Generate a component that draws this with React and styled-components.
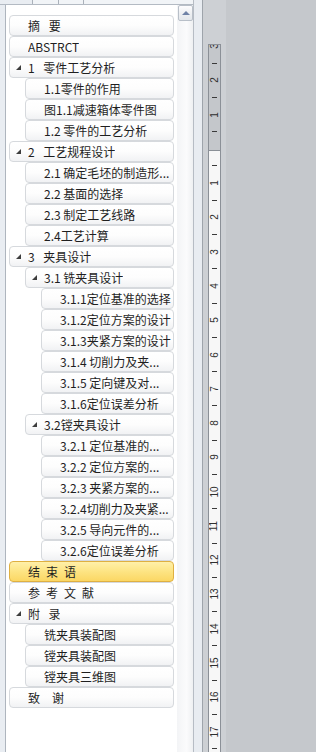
import React from 'react';
import styled, { createGlobalStyle } from 'styled-components';

const GlobalStyle = createGlobalStyle`
  html, body {
    margin: 0;
    padding: 0;
  }
  body {
    width: 316px;
    height: 752px;
    overflow: hidden;
    background: #c5c8cc;
    font-family: "Noto Sans CJK SC", "Noto Sans", sans-serif;
  }
`;

// Screen holds the navigation pane, the splitter and the document area
const Screen = styled.div`
  display: flex;
  width: 316px;
  height: 752px;
  overflow: hidden;
`;

const NavPane = styled.div`
  flex: none;
  width: 194px;
  display: flex;
  flex-direction: column;
  background: #e9edf2;
  border-right: 1px solid #b6bcc4;
  box-sizing: border-box;
`;

const TabStrip = styled.div`
  flex: none;
  height: 5px;
  display: flex;
  padding-left: 32px;
  box-sizing: border-box;
  border-bottom: 1px solid #b3bac3;
`;

const Tab = styled.div`
  width: ${p => p.$w}px;
  background: #f1f4f7;
  border-left: 1px solid #aab1ba;
  box-sizing: border-box;
  &:last-child {
    flex: 1;
  }
`;

const PaneBody = styled.div`
  flex: 1;
  display: flex;
  margin-left: 5px;
  border-left: 1px solid #aeb5be;
  min-height: 0;
`;

const Outline = styled.div`
  flex: 1;
  background: #ffffff;
  padding: 10px 3px 0 3px;
  display: flex;
  flex-direction: column;
`;

const ScrollTrack = styled.div`
  flex: none;
  width: 16px;
  background: linear-gradient(90deg, #f3f4f6, #fbfbfc 60%, #eef0f2);
  display: flex;
  flex-direction: column;
  align-items: center;
`;

const ScrollButton = styled.div`
  width: 15px;
  height: 16px;
  box-sizing: border-box;
  border: 1px solid #b8bfc8;
  border-radius: 2px;
  background: linear-gradient(#fdfdfe, #eef0f3 50%, #e3e7eb);
  display: flex;
  align-items: center;
  justify-content: center;
  margin-left: 1px;
`;

const UpArrow = styled.div`
  width: 0;
  height: 0;
  border-left: 4px solid transparent;
  border-right: 4px solid transparent;
  border-bottom: 4px solid #6f82a6;
  margin-top: -1px;
`;

const Item = styled.div`
  flex: none;
  box-sizing: border-box;
  height: 21px;
  margin-left: ${p => (p.$level - 1) * 16}px;
  padding: 0 1px 0 6px;
  display: flex;
  align-items: center;
  border: 1px solid ${p => (p.$active ? '#dfb041' : '#d6d9dd')};
  border-radius: 4px;
  background: ${p =>
    p.$active
      ? 'linear-gradient(#fff0a9, #fde483 50%, #fbd764)'
      : 'linear-gradient(#ffffff, #fdfdfd 50%, #f1f2f4)'};
  overflow: hidden;
`;

const Twisty = styled.span`
  flex: none;
  width: 12px;
  display: flex;
  align-items: center;
`;

const Triangle = styled.span`
  width: 0;
  height: 0;
  border-left: 5px solid transparent;
  border-bottom: 5px solid #3d3d3d;
`;

const Label = styled.span`
  font-size: 12px;
  color: #1f1f1f;
  white-space: pre;
  overflow: hidden;
  line-height: 19px;
`;

const Splitter = styled.div`
  flex: none;
  width: 8px;
  background: #e8ecf1;
  border-right: 1px solid #9ea4ab;
`;

const RulerColumn = styled.div`
  flex: none;
  width: 23px;
  background: #cdd0d4;
  padding: 44px 0 0 5px;
  box-sizing: border-box;
  display: flex;
`;

const Ruler = styled.div`
  width: 13px;
  box-sizing: border-box;
  border: 1px solid #8b9097;
  border-bottom: none;
  overflow: hidden;
  background: linear-gradient(#c4c7cb 0, #c4c7cb 105px, #8b9097 105px, #8b9097 106px, #f7f7f7 106px);
  display: flex;
  flex-direction: column;
`;

const Mark = styled.div`
  flex: none;
  height: 17.15px;
  display: flex;
  align-items: center;
  justify-content: center;
  &:first-child {
    margin-top: -7.6px;
  }
`;

const Tick = styled.div`
  width: 5px;
  height: 1px;
  background: #3a3a3a;
`;

const RulerNumber = styled.span`
  font-family: "Liberation Sans", Arial, sans-serif;
  font-size: 10px;
  line-height: 10px;
  color: #2f2f2f;
  transform: rotate(-90deg);
  white-space: nowrap;
`;

const Canvas = styled.div`
  flex: 1;
  background: #c5c8cc;
`;

const outline = [
  { level: 1, text: '摘\u2002 要' },
  { level: 1, text: 'ABSTRCT' },
  { level: 1, text: '1\u2002 零件工艺分析', open: true },
  { level: 2, text: '1.1零件的作用' },
  { level: 2, text: '图1.1减速箱体零件图' },
  { level: 2, text: '1.2 零件的工艺分析' },
  { level: 1, text: '2\u2002 工艺规程设计', open: true },
  { level: 2, text: '2.1 确定毛坯的制造形...' },
  { level: 2, text: '2.2 基面的选择' },
  { level: 2, text: '2.3 制定工艺线路' },
  { level: 2, text: '2.4工艺计算' },
  { level: 1, text: '3\u2002 夹具设计', open: true },
  { level: 2, text: '3.1 铣夹具设计', open: true },
  { level: 3, text: '3.1.1定位基准的选择' },
  { level: 3, text: '3.1.2定位方案的设计' },
  { level: 3, text: '3.1.3夹紧方案的设计' },
  { level: 3, text: '3.1.4 切削力及夹...' },
  { level: 3, text: '3.1.5 定向键及对...' },
  { level: 3, text: '3.1.6定位误差分析' },
  { level: 2, text: '3.2镗夹具设计', open: true },
  { level: 3, text: '3.2.1 定位基准的...' },
  { level: 3, text: '3.2.2 定位方案的...' },
  { level: 3, text: '3.2.3 夹紧方案的...' },
  { level: 3, text: '3.2.4切削力及夹紧...' },
  { level: 3, text: '3.2.5 导向元件的...' },
  { level: 3, text: '3.2.6定位误差分析' },
  { level: 1, text: '结\u2002束\u2002语', active: true },
  { level: 1, text: '参\u2002考\u2002文\u2002献' },
  { level: 1, text: '附\u2002\u2009录', open: true },
  { level: 2, text: '铣夹具装配图' },
  { level: 2, text: '镗夹具装配图' },
  { level: 2, text: '镗夹具三维图' },
  { level: 1, text: '致\u3000谢' },
];

// 3, 2, 1 above the margin, then 1..17 below, ticks in between
const rulerMarks = [3, 't', 2, 't', 1, 't', '', 't'];
for (let n = 1; n <= 17; n++) rulerMarks.push(n, 't');

export default function App() {
  return (
    <Screen>
      <GlobalStyle />
      <NavPane>
        <TabStrip>
          <Tab $w={26} />
          <Tab $w={25} />
          <Tab />
        </TabStrip>
        <PaneBody>
          <Outline>
            {outline.map((it, i) => (
              <Item key={i} $level={it.level} $active={it.active}>
                <Twisty>{it.open && <Triangle />}</Twisty>
                <Label>{it.text}</Label>
              </Item>
            ))}
          </Outline>
          <ScrollTrack>
            <ScrollButton>
              <UpArrow />
            </ScrollButton>
          </ScrollTrack>
        </PaneBody>
      </NavPane>
      <Splitter />
      <RulerColumn>
        <Ruler>
          {rulerMarks.map((m, i) => (
            <Mark key={i}>
              {m === 't' ? <Tick /> : <RulerNumber>{m}</RulerNumber>}
            </Mark>
          ))}
        </Ruler>
      </RulerColumn>
      <Canvas />
    </Screen>
  );
}
